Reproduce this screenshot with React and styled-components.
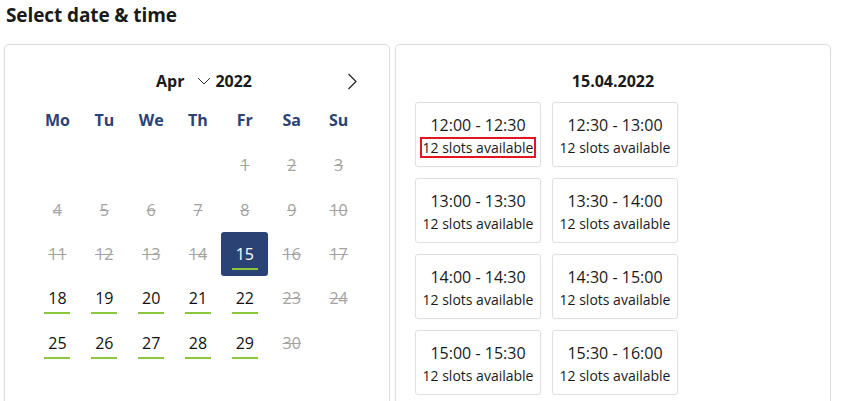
import React, { useState } from 'react';
import styled, { createGlobalStyle } from 'styled-components';

const GlobalStyle = createGlobalStyle`
  body {
    margin: 0;
    background: #fff;
    font-family: "Open Sans", "Noto Sans", sans-serif;
    color: #1a1a1a;
  }
`;

const NAVY = '#2a4374';
const GREEN = '#8cc63f';

const Page = styled.div`
  height: 401px;
  overflow: hidden;
  padding: 0 4px;
`;

const Title = styled.h2`
  margin: 0;
  padding: 2px 2px 0;
  height: 44px;
  box-sizing: border-box;
  font-size: 19px;
  font-weight: 700;
  letter-spacing: -0.1px;
`;

const Columns = styled.div`
  display: flex;
  gap: 5px;
  align-items: flex-start;
`;

const Card = styled.section`
  box-sizing: border-box;
  width: ${p => p.$w}px;
  height: 380px;
  background: #fff;
  border: 1px solid #dedede;
  border-radius: 5px;
  box-shadow: 0 0 3px rgba(0, 0, 0, 0.04);
`;

const CalendarCard = styled(Card)`
  padding: 21px 27px 0 29px;
`;

const MonthBar = styled.div`
  display: grid;
  grid-template-columns: 1fr auto 1fr;
  align-items: center;
  height: 30px;
`;

const MonthGroup = styled.div`
  grid-column: 2;
  display: flex;
  align-items: center;
  margin-left: 12px;
  font-size: 16px;
  font-weight: 700;
`;

const MonthSelect = styled.span`
  display: flex;
  align-items: center;
  gap: 13px;
  margin-right: 4px;
`;

const NextButton = styled.button`
  justify-self: end;
  border: 0;
  background: none;
  padding: 0;
  margin-right: 5px;
  display: flex;
  cursor: pointer;
`;

const Grid = styled.div`
  display: grid;
  grid-template-columns: repeat(7, 1fr);
  grid-auto-rows: 44.3px;
  margin-top: 3px;
`;

const WeekDay = styled.div`
  display: flex;
  align-items: center;
  justify-content: center;
  height: 40px;
  padding-top: 1px;
  box-sizing: border-box;
  font-size: 16px;
  font-weight: 700;
  color: ${NAVY};
`;

const Day = styled.div`
  position: relative;
  display: flex;
  align-items: center;
  justify-content: center;
  font-size: 16px;
  border-radius: 3px;
  color: ${p => (p.$disabled ? '#a3a3a3' : p.$selected ? '#fff' : '#111')};
  background: ${p => (p.$selected ? NAVY : 'transparent')};
  text-decoration: ${p => (p.$disabled ? 'line-through' : 'none')};
  cursor: ${p => (p.$disabled ? 'default' : 'pointer')};

  &::after {
    content: '';
    display: ${p => (p.$disabled || p.$empty ? 'none' : 'block')};
    position: absolute;
    left: 50%;
    bottom: 6px;
    width: 26px;
    height: 2px;
    margin-left: -13px;
    background: ${GREEN};
  }
`;

const SlotsCard = styled(Card)`
  padding: 25px 20px 0;
`;

const DateTitle = styled.div`
  text-align: center;
  font-size: 16px;
  font-weight: 700;
  height: 32px;
`;

const SlotGrid = styled.div`
  display: grid;
  grid-template-columns: repeat(2, 126px);
  grid-auto-rows: 65px;
  gap: 11px;
  margin-left: -1px;
`;

const Slot = styled.button`
  box-sizing: border-box;
  display: flex;
  flex-direction: column;
  align-items: center;
  padding: 11px 0 0;
  background: #fff;
  border: 1px solid #e0e0e0;
  border-radius: 3px;
  box-shadow: 0 0 2px rgba(0, 0, 0, 0.05);
  font-family: inherit;
  color: #1a1a1a;
  cursor: pointer;
`;

const SlotTime = styled.span`
  font-size: 16px;
  line-height: 22px;
`;

const SlotInfo = styled.span`
  box-sizing: border-box;
  margin-top: 1px;
  padding: 0 1px;
  font-size: 14px;
  line-height: 17px;
  border: 2px solid ${p => (p.$marked ? '#e3161f' : 'transparent')};
`;

const Chevron = ({ dir }) =>
  dir === 'down' ? (
    <svg width="14" height="8" viewBox="0 0 14 8" fill="none" stroke="#333" strokeWidth="1">
      <path d="M1 1l6 6 6-6" />
    </svg>
  ) : (
    <svg width="10" height="17" viewBox="0 0 10 17" fill="none" stroke="#222" strokeWidth="1.2">
      <path d="M1.5 1l7.5 7.5L1.5 16" />
    </svg>
  );

const weekDays = ['Mo', 'Tu', 'We', 'Th', 'Fr', 'Sa', 'Su'];
const available = [15, 18, 19, 20, 21, 22, 25, 26, 27, 28, 29];

const slots = [
  '12:00 - 12:30',
  '12:30 - 13:00',
  '13:00 - 13:30',
  '13:30 - 14:00',
  '14:00 - 14:30',
  '14:30 - 15:00',
  '15:00 - 15:30',
  '15:30 - 16:00',
];

export default function App() {
  const [selected, setSelected] = useState(15);
  const cells = [...Array(4).fill(null), ...Array.from({ length: 30 }, (_, i) => i + 1)];

  return (
    <Page>
      <GlobalStyle />
      <Title>Select date &amp; time</Title>
      <Columns>
        <CalendarCard $w={386}>
          <MonthBar>
            <MonthGroup>
              <MonthSelect>
                Apr <Chevron dir="down" />
              </MonthSelect>
              2022
            </MonthGroup>
            <NextButton aria-label="Next month">
              <Chevron dir="right" />
            </NextButton>
          </MonthBar>
          <Grid>
            {weekDays.map(d => (
              <WeekDay key={d}>{d}</WeekDay>
            ))}
            {cells.map((d, i) => {
              const ok = d && available.includes(d);
              return (
                <Day
                  key={i}
                  $empty={!d}
                  $disabled={d && !ok}
                  $selected={d === selected}
                  onClick={() => ok && setSelected(d)}
                >
                  {d}
                </Day>
              );
            })}
          </Grid>
        </CalendarCard>
        <SlotsCard $w={436}>
          <DateTitle>{String(selected).padStart(2, '0')}.04.2022</DateTitle>
          <SlotGrid>
            {slots.map((s, i) => (
              <Slot key={s}>
                <SlotTime>{s}</SlotTime>
                <SlotInfo $marked={i === 0}>12 slots available</SlotInfo>
              </Slot>
            ))}
          </SlotGrid>
        </SlotsCard>
      </Columns>
    </Page>
  );
}
